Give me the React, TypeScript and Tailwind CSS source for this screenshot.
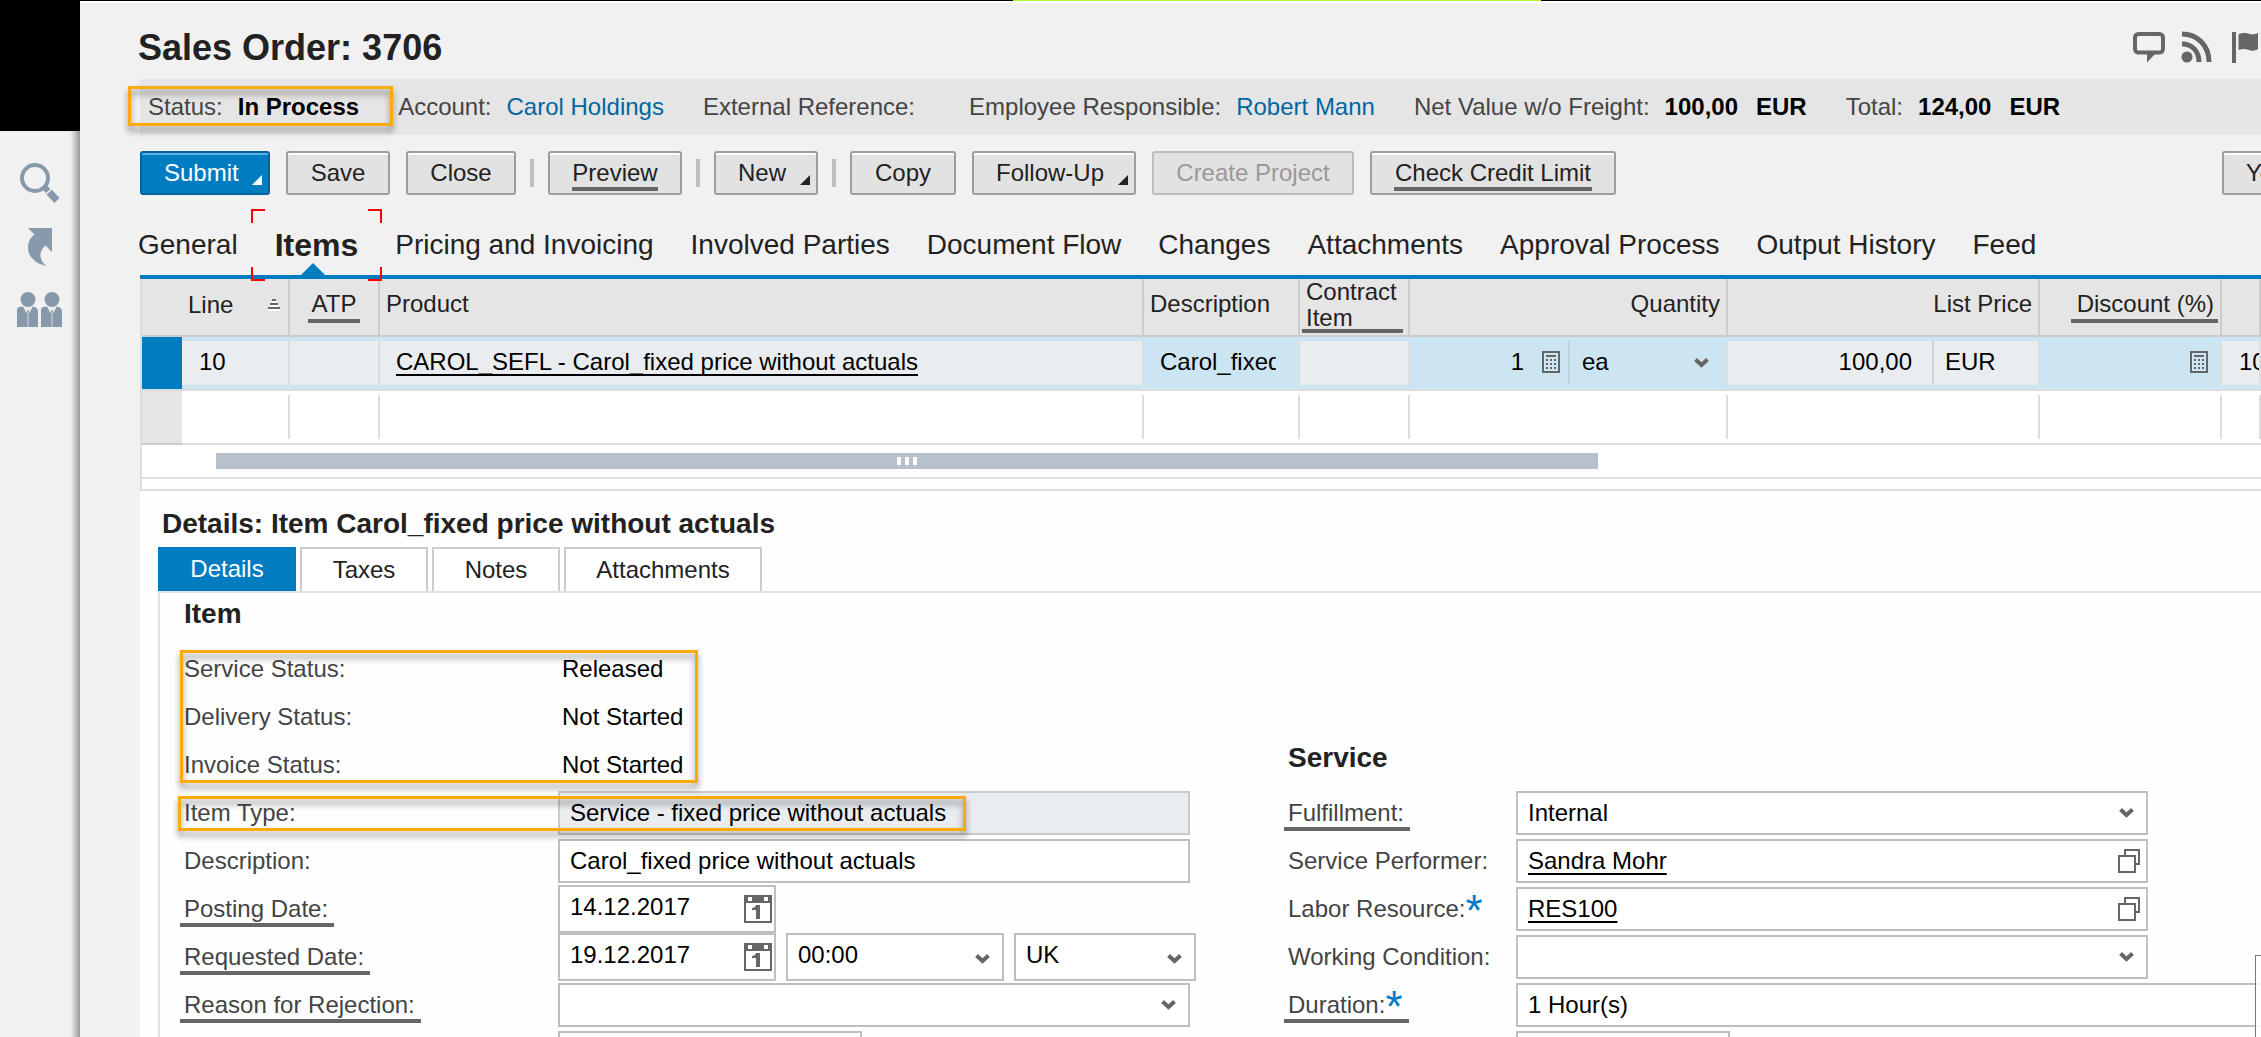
import type { ReactNode } from "react";

/* ---------- icons ---------- */

function SearchIcon() {
  return (
    <svg width="42" height="42" viewBox="0 0 42 42" fill="none" aria-hidden="true">
      <circle cx="16" cy="16" r="13" stroke="#8799ab" strokeWidth="4" />
      <path d="M24.500 24l5 5.500" stroke="#8799ab" strokeWidth="6" />
      <path d="M30 30l8 8.500" stroke="#8799ab" strokeWidth="7" />
      <path d="M27.500 31.500l5.500-5" stroke="#f1f1f1" strokeWidth="1.500" />
    </svg>
  );
}

function ShortcutIcon() {
  return (
    <svg width="26" height="38" viewBox="0 0 26 38" fill="#8799ab" aria-hidden="true">
      <path d="M1 0H25V24L18.500 17.500C14 21 12 27 14.500 32C15.500 34 17 36 19.500 38C9 36 1 29 1 19.500C1 14 3.500 9.500 7.500 6.500Z" />
    </svg>
  );
}

function PeopleIcon() {
  const person = (
    <>
      <circle cx="11" cy="7.500" r="7.500" />
      <path d="M0 18C0 15.500 2 14.500 6 14.500L9.500 21L11 17L12.500 21L15.500 14.500C19 15 21 16.500 21 19V35H0Z" />
      <path d="M11 20V35" stroke="#b9c4ce" strokeWidth="1.500" />
    </>
  );
  return (
    <svg width="46" height="35" viewBox="0 0 46 35" fill="#8799ab" aria-hidden="true">
      {person}
      <g transform="translate(24 0)">{person}</g>
    </svg>
  );
}

function CommentIcon() {
  return (
    <svg width="32" height="31" viewBox="0 0 32 31" aria-hidden="true">
      <rect x="2" y="2" width="28" height="18.500" rx="3.500" fill="none" stroke="#666" strokeWidth="4" />
      <path d="M14 21H23L14 30.500Z" fill="#666" />
    </svg>
  );
}

function FeedIcon() {
  return (
    <svg width="31" height="32" viewBox="0 0 31 32" fill="none" stroke="#666" aria-hidden="true">
      <circle cx="6" cy="26" r="5.500" fill="#666" stroke="none" />
      <path d="M1 13C11 13 18 20 18 31" strokeWidth="5" />
      <path d="M1 3C16 3 28 14 28 31" strokeWidth="5" />
    </svg>
  );
}

function FlagIcon() {
  return (
    <svg width="29" height="31" viewBox="0 0 29 31" fill="#666" aria-hidden="true">
      <rect x="0" y="0" width="4" height="31" />
      <path d="M6.500 2.500C11 0 15 1 18 2C21 3 23.500 2 26 1V17C23 19 20 19 17 18C13 16.500 10 16.500 6.500 18Z" />
    </svg>
  );
}

function Chevron({ className = "" }: { className?: string }) {
  return (
    <svg width="15" height="10" viewBox="0 0 15 10" fill="none" stroke="#666" strokeWidth="4" className={className} aria-hidden="true">
      <path d="M1.500 1.500L7.500 7L13.500 1.500" />
    </svg>
  );
}

function CalculatorIcon() {
  return (
    <svg width="18" height="22" viewBox="0 0 18 22" aria-hidden="true">
      <rect x="1" y="1" width="16" height="20" fill="none" stroke="#666" strokeWidth="2" />
      <rect x="4" y="4" width="10" height="2" fill="#666" />
      {[8, 12, 16].map((y) =>
        [4, 8, 12].map((x) => <rect key={`${x}-${y}`} x={x} y={y} width="2" height="2" fill="#666" />),
      )}
    </svg>
  );
}

function CalendarIcon() {
  return (
    <svg width="28" height="28" viewBox="0 0 28 28" aria-hidden="true">
      <rect x="1" y="1" width="26" height="26" fill="#fff" stroke="#666" strokeWidth="2" />
      <rect width="28" height="8" fill="#666" />
      <rect x="4" y="2" width="4" height="4" fill="#fff" />
      <rect x="20" y="2" width="4" height="4" fill="#fff" />
      <path d="M12 10H16V24H12V15H8V13Q11 13 12 10Z" fill="#666" />
    </svg>
  );
}

function ValueHelpIcon() {
  return (
    <svg width="22" height="24" viewBox="0 0 22 24" fill="#fff" stroke="#666" strokeWidth="2" aria-hidden="true">
      <rect x="7" y="1" width="14" height="14" />
      <rect x="1" y="7" width="16" height="16" />
    </svg>
  );
}

function SortIcon() {
  return (
    <svg width="12" height="12" viewBox="0 0 12 12" aria-hidden="true">
      <path d="M4 2h4v2h2v4h2v4H0V8h2V4h2z" fill="#fff" />
      <rect x="4" y="0" width="4" height="2" fill="#666" />
      <rect x="2" y="4" width="8" height="2" fill="#666" />
      <rect x="0" y="8" width="12" height="2" fill="#666" />
    </svg>
  );
}

/* ---------- small parts ---------- */

function Highlight({ className }: { className: string }) {
  return (
    <div
      className={`pointer-events-none absolute z-10 border-3 border-[#faab0a] [filter:drop-shadow(0_5px_3px_rgba(0,0,0,0.45))] ${className}`}
    />
  );
}

function Fact({ label, children }: { label: string; children?: ReactNode }) {
  return (
    <div className="flex gap-[15px]">
      <span className="text-[#444]">{label}</span>
      <span className="flex gap-[18px] font-bold text-black">{children}</span>
    </div>
  );
}

function ToolButton({
  children,
  width,
  menu,
  underlined,
  disabled,
  primary,
}: {
  children: ReactNode;
  width: string;
  menu?: boolean;
  underlined?: boolean;
  disabled?: boolean;
  primary?: boolean;
}) {
  const look = primary
    ? "border-[#00639a] bg-[#007cc0] text-white shadow-[inset_0_2px_0_#5bb0de]"
    : disabled
      ? "border-[#bcbcbc] bg-[#e2e2e2] text-[#999]"
      : "border-[#9d9d9d] bg-[#e2e2e2] text-[#222] shadow-[inset_0_2px_0_#fff]";
  return (
    <button
      type="button"
      disabled={disabled}
      className={`relative flex h-11 shrink-0 items-center rounded-[3px] border-2 ${
        menu ? "justify-start pl-[22px]" : "justify-center"
      } ${look} ${width}`}
    >
      {children}
      {underlined && <span className="absolute inset-x-[22px] bottom-0.5 h-1 bg-[#666]" />}
      {menu && (
        <svg width="10" height="10" viewBox="0 0 10 10" className="absolute right-1.5 bottom-2" fill="currentColor" aria-hidden="true">
          <path d="M10 0V10H0Z" />
        </svg>
      )}
    </button>
  );
}

function Separator() {
  return <span className="-mx-0.5 h-7 w-1 shrink-0 bg-[#bfbfbf]" />;
}

function FieldLabel({
  htmlFor,
  children,
  width,
  underlined,
  required,
}: {
  htmlFor?: string;
  children: string;
  width: string;
  underlined?: boolean;
  required?: boolean;
}) {
  return (
    <div className={`shrink-0 ${width}`}>
      <label htmlFor={htmlFor} className="relative inline-flex pr-1.5 whitespace-nowrap text-[#444]">
        {children}
        {required && <span className="h-5 text-[44px] leading-8 text-[#007cc0]">*</span>}
        {underlined && <span className="absolute right-0 -bottom-1 -left-1 h-1 bg-[#666]" />}
      </label>
    </div>
  );
}

function SelectBox({ id, value, className }: { id: string; value: string; className: string }) {
  return (
    <div className={`relative ${className}`}>
      <select
        id={id}
        aria-label={id}
        defaultValue={value}
        className={`h-full w-full appearance-none border-2 border-[#bfbfbf] bg-white pl-2.5 text-black ${
          className.includes("h-12") ? "pb-1" : ""
        }`}
      >
        <option>{value}</option>
      </select>
      <Chevron className="pointer-events-none absolute right-3.5 bottom-[17px]" />
    </div>
  );
}

function DateBox({ id, value }: { id: string; value: string }) {
  return (
    <div className="flex h-12 w-[218px] shrink-0 items-center border-2 border-[#bfbfbf] bg-white pr-0.5">
      <input id={id} defaultValue={value} className="h-full min-w-0 flex-1 pb-1 pl-2.5 text-black outline-none" />
      <button type="button" aria-label="Choose date" className="flex">
        <CalendarIcon />
      </button>
    </div>
  );
}

function LookupBox({ id, value }: { id: string; value: string }) {
  return (
    <div className="flex h-11 flex-1 items-center border-2 border-[#bfbfbf] bg-white pr-1.5">
      <input
        id={id}
        defaultValue={value}
        className="h-full min-w-0 flex-1 pl-2.5 text-black underline decoration-2 underline-offset-4 outline-none"
      />
      <button type="button" aria-label="Value help" className="flex">
        <ValueHelpIcon />
      </button>
    </div>
  );
}

/* ---------- page parts ---------- */

const tabs = [
  "General",
  "Items",
  "Pricing and Invoicing",
  "Involved Parties",
  "Document Flow",
  "Changes",
  "Attachments",
  "Approval Process",
  "Output History",
  "Feed",
];

function MainTabs() {
  return (
    <nav className="flex h-20 gap-[37px] pt-5 pr-4 text-[28px] whitespace-nowrap text-[#222]">
      {tabs.map((tab) =>
        tab === "Items" ? (
          <button key={tab} type="button" className="relative text-[32px] font-bold">
            {tab}
            <svg width="24" height="12" viewBox="0 0 24 12" className="absolute bottom-0 left-[26px]" fill="#007cc0" aria-hidden="true">
              <path d="M0 12L12 0L24 12Z" />
            </svg>
            <span className="absolute -top-1.5 -left-6 size-3.5 border-t-2 border-l-2 border-[#f00]" />
            <span className="absolute -top-1.5 -right-6 size-3.5 border-t-2 border-r-2 border-[#f00]" />
            <span className="absolute -bottom-1.5 -left-6 z-10 size-3.5 border-b-2 border-l-2 border-[#f00]" />
            <span className="absolute -right-6 -bottom-1.5 z-10 size-3.5 border-r-2 border-b-2 border-[#f00]" />
          </button>
        ) : (
          <button key={tab} type="button">
            {tab}
          </button>
        ),
      )}
    </nav>
  );
}

function HeadCell({ children, right, underlined }: { children?: ReactNode; right?: boolean; underlined?: string }) {
  return (
    <th className={`h-[58px] border-r-2 border-b-2 border-[#ccc] bg-[#e5e5e5] p-0 px-1.5 pb-1 font-normal ${right ? "text-right" : "text-left"}`}>
      <span className="relative inline-block align-top leading-[26px]">
        {children}
        {underlined && <span className={`absolute h-1 bg-[#666] ${underlined}`} />}
      </span>
    </th>
  );
}

function Cell({ children, tone = "readonly" }: { children?: ReactNode; tone?: "readonly" | "edit" | "empty" }) {
  const bg = tone === "readonly" ? "bg-[#e9edf0]" : tone === "edit" ? "bg-[#cce5f2]" : "bg-white";
  return (
    <td className="border-b-2 border-[#ddd] p-0">
      <div className={`my-1 flex h-11 items-center border-r-2 border-[#ddd] pb-0.5 ${bg}`}>{children}</div>
    </td>
  );
}

function ItemTable() {
  return (
    <div className="border-b-2 border-l-2 border-[#ddd] bg-white">
      <table className="w-full table-fixed border-separate border-spacing-0 text-[#222]">
        <colgroup>
          <col className="w-10" />
          <col className="w-[108px]" />
          <col className="w-[90px]" />
          <col />
          <col className="w-[156px]" />
          <col className="w-[110px]" />
          <col className="w-[318px]" />
          <col className="w-[312px]" />
          <col className="w-[182px]" />
          <col className="w-[39px]" />
        </colgroup>
        <thead>
          <tr>
            <th className="border-b-2 border-[#ccc] bg-[#e5e5e5] p-0" />
            <th className="h-[58px] border-r-2 border-b-2 border-[#ccc] bg-[#e5e5e5] p-0 pb-1 font-normal">
              <div className="flex items-center justify-between pr-2 pl-1.5">
                Line
                <SortIcon />
              </div>
            </th>
            <th className="h-[58px] border-r-2 border-b-2 border-[#ccc] bg-[#e5e5e5] p-0 pb-1 font-normal">
              <span className="relative inline-block align-top leading-[26px]">
                ATP
                <span className="absolute -inset-x-1 -bottom-1.5 h-1 bg-[#666]" />
              </span>
            </th>
            <HeadCell>Product</HeadCell>
            <HeadCell>Description</HeadCell>
            <HeadCell underlined="-bottom-0.5 -left-1 -right-1.5">
              Contract
              <br />
              Item
            </HeadCell>
            <HeadCell right>Quantity</HeadCell>
            <HeadCell right>List Price</HeadCell>
            <HeadCell right underlined="-bottom-1.5 -left-1.5 -right-1">
              Discount (%)
            </HeadCell>
            <HeadCell />
          </tr>
        </thead>
        <tbody className="text-black">
          <tr className="bg-[#cce5f2]">
            <td className="border-b-2 border-[#ddd] bg-[#007cc0] p-0" />
            <Cell>
              <span className="pl-[17px]">10</span>
            </Cell>
            <Cell />
            <Cell>
              <a href="#product" className="pl-4 underline decoration-2 underline-offset-4 [text-decoration-skip-ink:none]">
                CAROL_SEFL - Carol_fixed price without actuals
              </a>
            </Cell>
            <Cell tone="edit">
              <input
                aria-label="Description"
                defaultValue="Carol_fixed price without actuals"
                className="ml-4 w-[116px] bg-transparent outline-none"
              />
            </Cell>
            <Cell />
            <Cell tone="edit">
              <input aria-label="Quantity" defaultValue="1" className="w-0 min-w-0 flex-1 bg-transparent pr-[18px] text-right outline-none" />
              <button type="button" aria-label="Calculate quantity" className="flex shrink-0">
                <CalculatorIcon />
              </button>
              <span className="ml-2 h-11 w-0.5 shrink-0 bg-[#bdd5e2]" />
              <div className="relative w-[156px] shrink-0">
                <select aria-label="Unit" className="w-full appearance-none bg-transparent pl-3 outline-none">
                  <option>ea</option>
                </select>
                <Chevron className="pointer-events-none absolute right-[17px] bottom-2" />
              </div>
            </Cell>
            <Cell>
              <span className="flex-1 pr-5 text-right">100,00</span>
              <span className="h-11 w-0.5 bg-[#ccd3d9]" />
              <span className="w-[104px] pl-[11px]">EUR</span>
            </Cell>
            <Cell tone="edit">
              <input aria-label="Discount" className="w-0 min-w-0 flex-1 bg-transparent outline-none" />
              <button type="button" aria-label="Calculate discount" className="flex shrink-0 pr-3">
                <CalculatorIcon />
              </button>
            </Cell>
            <Cell>
              <span className="overflow-hidden pl-[17px]">10</span>
            </Cell>
          </tr>
          <tr>
            <td className="border-b-2 border-[#ccc] bg-[#e5e5e5] p-0" />
            <Cell tone="empty" />
            <Cell tone="empty" />
            <Cell tone="empty" />
            <Cell tone="empty" />
            <Cell tone="empty" />
            <Cell tone="empty" />
            <Cell tone="empty" />
            <Cell tone="empty" />
            <Cell tone="empty" />
          </tr>
        </tbody>
      </table>
      <div className="border-b-2 border-[#e0e0e0] py-2">
        <div className="ml-[74px] flex h-4 w-[65.2%] items-center justify-center gap-1 bg-[#b7c1cb]">
          <span className="h-2 w-1 bg-white" />
          <span className="h-2 w-1 bg-white" />
          <span className="h-2 w-1 bg-white" />
        </div>
      </div>
      <div className="h-2.5" />
    </div>
  );
}

const detailTabs: [string, string][] = [
  ["Taxes", "w-32"],
  ["Notes", "w-32"],
  ["Attachments", "w-[198px]"],
];

function ItemDetails() {
  return (
    <section>
      <h2 className="flex h-14 items-center pt-2.5 pl-[22px] text-[28px] font-bold text-[#222]">
        Details: Item Carol_fixed price without actuals
      </h2>
      <div className="ml-[18px] flex gap-1">
        <button type="button" className="h-11 w-[138px] bg-[#007cc0] text-white">
          Details
        </button>
        {detailTabs.map(([name, width]) => (
          <button key={name} type="button" className={`h-11 border-x-2 border-t-2 border-[#ccc] bg-white text-[#222] ${width}`}>
            {name}
          </button>
        ))}
      </div>
      <div className="ml-[18px] grid grid-cols-[1104fr_973fr] border-t-2 border-l-2 border-[#e2e2e2] pl-6">
        <div className="mr-[98px] flex min-w-0 flex-col">
          <h3 className="mb-3 flex h-[42px] items-center text-[28px] font-bold text-[#222]">Item</h3>
          <div className="relative mb-1 flex flex-col gap-1">
            {[
              ["Service Status:", "Released"],
              ["Delivery Status:", "Not Started"],
              ["Invoice Status:", "Not Started"],
            ].map(([name, value]) => (
              <div key={name} className="flex h-11 items-center">
                <span className="w-[378px] text-[#444]">{name}</span>
                <span className="text-black">{value}</span>
              </div>
            ))}
            <Highlight className="top-[3px] -left-1 h-[133px] w-[518px]" />
          </div>
          <div className="flex flex-col gap-1">
            <div className="relative flex h-11 items-center">
              <FieldLabel htmlFor="item-type" width="w-[374px]">Item Type:</FieldLabel>
              <input
                id="item-type"
                readOnly
                value="Service - fixed price without actuals"
                className="h-11 min-w-0 flex-1 border-2 border-[#c8cacc] bg-[#e9edf0] pl-2.5 text-black outline-none"
              />
              <Highlight className="top-[5px] -left-1.5 h-[35px] w-[788px]" />
            </div>
            <div className="flex h-11 items-center">
              <FieldLabel htmlFor="description" width="w-[374px]">Description:</FieldLabel>
              <input
                id="description"
                defaultValue="Carol_fixed price without actuals"
                className="h-11 min-w-0 flex-1 border-2 border-[#bfbfbf] bg-white pl-2.5 text-black outline-none"
              />
            </div>
            <div className="flex h-11 items-center">
              <FieldLabel htmlFor="posting-date" width="w-[374px]" underlined>Posting Date:</FieldLabel>
              <DateBox id="posting-date" value="14.12.2017" />
            </div>
            <div className="flex h-11 items-center">
              <FieldLabel htmlFor="requested-date" width="w-[374px]" underlined>Requested Date:</FieldLabel>
              <div className="flex gap-2.5">
                <DateBox id="requested-date" value="19.12.2017" />
                <SelectBox id="requested-time" value="00:00" className="h-12 w-[218px] shrink-0" />
                <SelectBox id="time-zone" value="UK" className="h-12 w-[182px] shrink-0" />
              </div>
            </div>
            <div className="flex h-11 items-center">
              <FieldLabel htmlFor="rejection" width="w-[374px]" underlined>Reason for Rejection:</FieldLabel>
              <SelectBox id="rejection" value="" className="h-11 flex-1" />
            </div>
            <div className="ml-[374px] h-11 w-[304px] border-2 border-[#bfbfbf] bg-white" />
          </div>
        </div>

        <div className="flex min-w-0 flex-col gap-1 pt-[150px]">
          <h3 className="mb-3.5 flex h-[30px] items-center text-[28px] font-bold text-[#222]">Service</h3>
          <div className="mr-[113px] flex h-11 items-center">
            <FieldLabel htmlFor="fulfillment" width="w-[228px]" underlined>Fulfillment:</FieldLabel>
            <SelectBox id="fulfillment" value="Internal" className="h-11 flex-1" />
          </div>
          <div className="mr-[113px] flex h-11 items-center">
            <FieldLabel htmlFor="performer" width="w-[228px]">Service Performer:</FieldLabel>
            <LookupBox id="performer" value="Sandra Mohr" />
          </div>
          <div className="mr-[113px] flex h-11 items-center">
            <FieldLabel htmlFor="resource" width="w-[228px]" required>Labor Resource:</FieldLabel>
            <LookupBox id="resource" value="RES100" />
          </div>
          <div className="mr-[113px] flex h-11 items-center">
            <FieldLabel htmlFor="condition" width="w-[228px]">Working Condition:</FieldLabel>
            <SelectBox id="condition" value="" className="h-11 flex-1" />
          </div>
          <div className="flex h-11 items-center">
            <FieldLabel htmlFor="duration" width="w-[228px]" underlined required>Duration:</FieldLabel>
            <input
              id="duration"
              defaultValue="1 Hour(s)"
              className="h-11 min-w-0 flex-1 border-2 border-r-0 border-[#bfbfbf] bg-white pl-2.5 text-black outline-none"
            />
          </div>
          <div className="ml-[228px] h-11 w-[214px] border-2 border-[#bfbfbf] bg-white" />
        </div>
      </div>
    </section>
  );
}

export default function App() {
  return (
    <div className="relative flex h-screen overflow-hidden bg-[#f1f1f1] font-['Liberation_Sans',Arial,sans-serif] text-[24px] leading-7">
      <aside className="flex w-20 shrink-0 flex-col">
        <div className="h-[131px] bg-black" />
        <nav className="flex flex-1 flex-col bg-linear-to-r from-transparent from-88% to-[#999]">
          <button type="button" aria-label="Search" className="mt-[31px] pl-[19px]">
            <SearchIcon />
          </button>
          <button type="button" aria-label="Shortcuts" className="mt-6 pl-[27px]">
            <ShortcutIcon />
          </button>
          <button type="button" aria-label="People" className="mt-[26px] pl-[17px]">
            <PeopleIcon />
          </button>
        </nav>
      </aside>

      <main className="flex min-w-0 flex-1 flex-col">
        <div className="flex h-[3px] shrink-0 items-start bg-white">
          <div className="h-px w-[42.8%] bg-black" />
          <div className="h-px w-[24.2%] bg-[#adff2f]" />
          <div className="h-px flex-1 bg-black" />
        </div>

        <div className="flex min-w-0 flex-1 flex-col pl-[60px]">
          <header className="flex h-[76px] shrink-0 items-center justify-between pt-2">
            <h1 className="-ml-0.5 pt-1.5 text-[36px] leading-10 font-bold text-[#222]">Sales Order: 3706</h1>
            <div className="flex gap-4 pt-1">
              <button type="button" aria-label="Comment"><CommentIcon /></button>
              <button type="button" aria-label="Feed updates"><FeedIcon /></button>
              <button type="button" aria-label="Flag" className="ml-1"><FlagIcon /></button>
            </div>
          </header>

          <div className="relative flex h-14 shrink-0 items-center gap-[39px] bg-[#e5e5e5] pl-2 whitespace-nowrap">
            <Fact label="Status:">In Process</Fact>
            <Fact label="Account:">
              <a href="#account" className="font-normal text-[#00679e]">Carol Holdings</a>
            </Fact>
            <Fact label="External Reference:" />
            <Fact label="Employee Responsible:">
              <a href="#employee" className="font-normal text-[#00679e]">Robert Mann</a>
            </Fact>
            <Fact label="Net Value w/o Freight:">
              <span>100,00</span>
              <span>EUR</span>
            </Fact>
            <Fact label="Total:">
              <span>124,00</span>
              <span>EUR</span>
            </Fact>
            <Highlight className="top-[7px] -left-3 h-10 w-[265px]" />
          </div>

          <div className="mt-4 flex h-11 shrink-0 items-center gap-4 overflow-hidden whitespace-nowrap">
            <ToolButton primary menu width="w-[130px]">Submit</ToolButton>
            <ToolButton width="w-[104px]">Save</ToolButton>
            <ToolButton width="w-[110px]">Close</ToolButton>
            <Separator />
            <ToolButton underlined width="w-[134px]">Preview</ToolButton>
            <Separator />
            <ToolButton menu width="w-[104px]">New</ToolButton>
            <Separator />
            <ToolButton width="w-[106px]">Copy</ToolButton>
            <ToolButton menu width="w-[164px]">Follow-Up</ToolButton>
            <ToolButton disabled width="w-[202px]">Create Project</ToolButton>
            <ToolButton underlined width="w-[246px]">Check Credit Limit</ToolButton>
            <button
              type="button"
              className="ml-auto h-11 w-[39px] shrink-0 overflow-hidden rounded-l-[3px] border-2 border-r-0 border-[#9d9d9d] bg-[#e2e2e2] pl-[22px] text-left text-[#222] shadow-[inset_0_2px_0_#fff]"
            >
              Yo
            </button>
          </div>

          <div className="-ml-0.5 shrink-0">
            <MainTabs />
          </div>
          <div className="h-1 shrink-0 bg-[#007cc0]" />
          <div className="flex-1 bg-[#fefefe]">
            <ItemTable />
            <ItemDetails />
          </div>
        </div>
      </main>

      <div className="absolute right-0 bottom-0 h-[82px] w-1.5 border-t border-l border-[#777] bg-white/85" />
    </div>
  );
}
